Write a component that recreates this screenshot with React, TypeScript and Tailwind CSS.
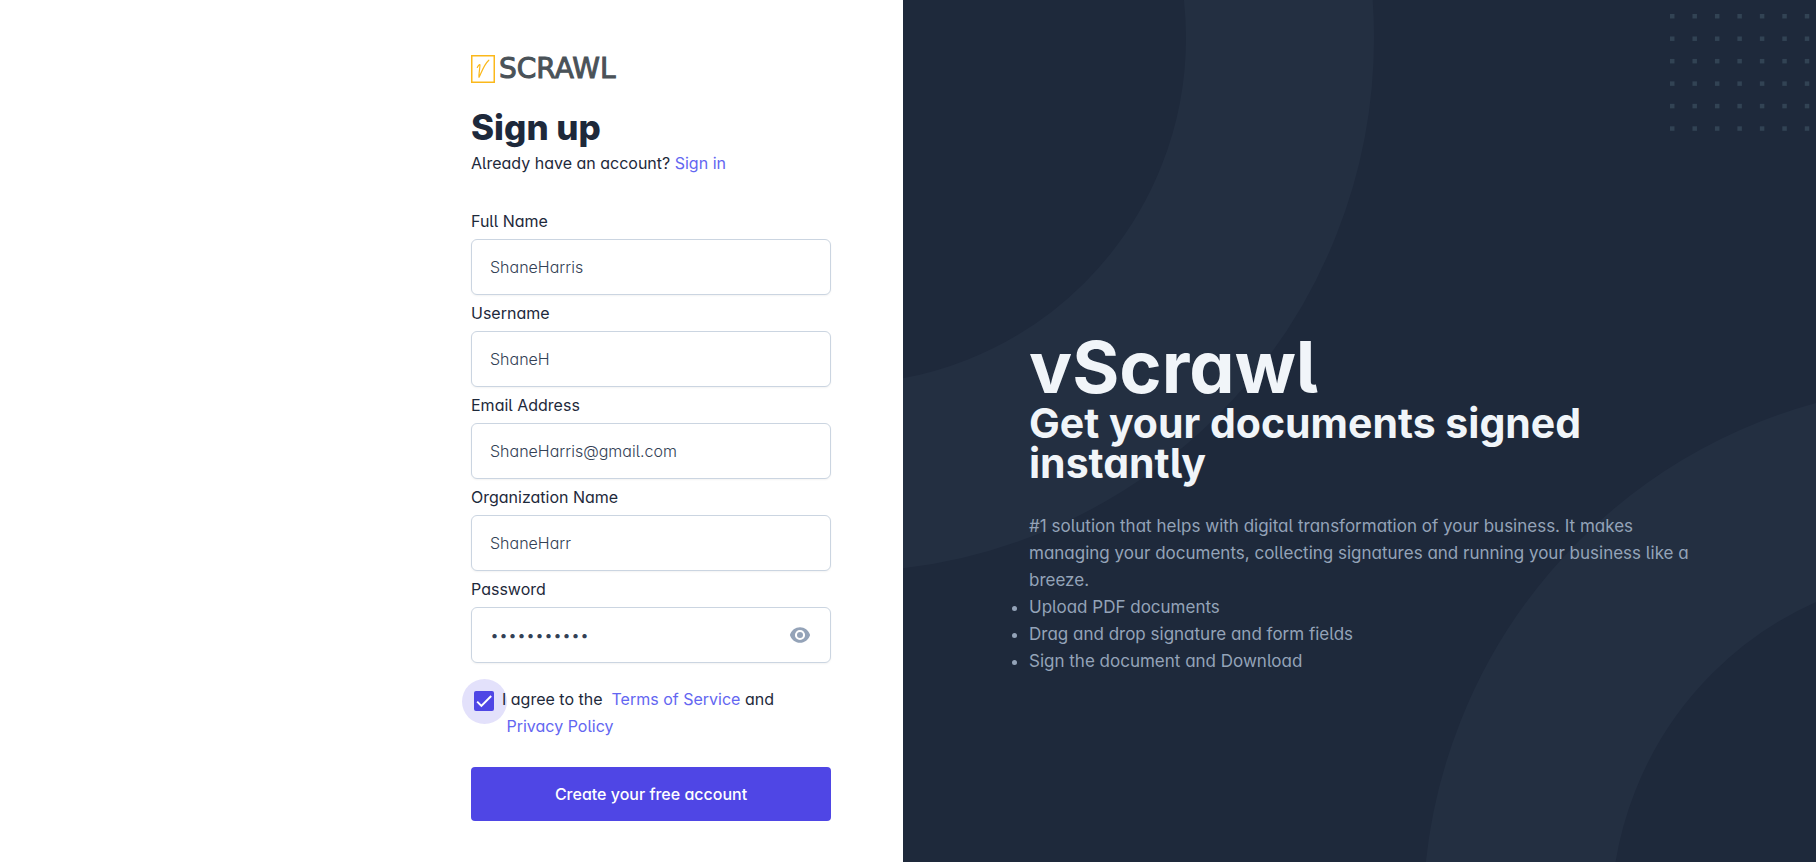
import React from "react";

const fields = [
  { id: "fullName", label: "Full Name", type: "text", value: "ShaneHarris" },
  { id: "username", label: "Username", type: "text", value: "ShaneH" },
  { id: "email", label: "Email Address", type: "email", value: "ShaneHarris@gmail.com" },
  { id: "organization", label: "Organization Name", type: "text", value: "ShaneHarr" },
  { id: "password", label: "Password", type: "password", value: "Shane123456" },
];

const perks = ["Upload PDF documents", "Drag and drop signature and form fields", "Sign the document and Download"];

const dots = Array.from({ length: 42 }, (_, i) => ({ x: (i % 7) * 20, y: Math.floor(i / 7) * 20 }));

function Logo() {
  return (
    <div className="flex h-7 items-center gap-1 text-[#4a5258]">
      <svg className="h-7 w-6" viewBox="0 0 24 28" fill="none" aria-hidden="true">
        <rect x="0.75" y="0.75" width="22.5" height="26.5" stroke="#fbb81b" strokeWidth="1.5" />
        <path d="M6.300 12.500C7 10.800 8.300 9.300 8.900 9.800C9.300 11 7.600 19 8 22.300C9.800 19.500 12.500 10 17.800 5.200" stroke="#fbb81b" strokeWidth="1.2" strokeLinecap="round" strokeLinejoin="round" />
      </svg>
      <span className="font-['DejaVu_Sans',sans-serif] text-[28px] leading-7 [-webkit-text-stroke:1px]">SCRAWL</span>
    </div>
  );
}

function EyeIcon() {
  return (
    <svg className="size-6" viewBox="0 0 24 24" fill="currentColor" aria-hidden="true">
      <path fillRule="evenodd" d="M12 4.200C16.600 4.200 20.600 7.200 22.100 12C20.600 16.800 16.600 19.800 12 19.800S3.400 16.800 1.900 12C3.400 7.200 7.400 4.200 12 4.200zM12 6.900a5.100 5.100 0 1 0 0 10.200 5.100 5.100 0 0 0 0-10.200z" />
      <circle cx="12" cy="12" r="3" />
    </svg>
  );
}

export default function App() {
  return (
    <div className="grid min-h-screen grid-cols-[903fr_913fr] bg-white font-['Inter',sans-serif] text-base text-[#1e293b] [font-feature-settings:'cv11','cv05']">
      <main className="flex justify-end px-18 pt-[55px] pb-10">
        <div className="w-full max-w-90">
          <Logo />
          <h1 className="mt-5 text-[35px] leading-[48px] font-extrabold">Sign up</h1>
          <p className="leading-6">
            Already have an account?{" "}
            <a href="#signin" className="text-[#6366f1]">Sign in</a>
          </p>
          <form className="mt-7" onSubmit={(e) => e.preventDefault()}>
            {fields.map((f) => (
              <div key={f.id} className="flex flex-col">
                <label htmlFor={f.id} className="pt-1.5 pb-1.5 leading-6">{f.label}</label>
                <div className="flex h-14 items-center rounded-md border border-[#cbd5e1] bg-white px-[18px] shadow-xs">
                  <input id={f.id} type={f.type} defaultValue={f.value} className="min-w-0 flex-1 font-light text-[#334155] outline-none" />
                  {f.type === "password" && (
                    <button type="button" aria-label="Show password" className="text-[#94a3b8]">
                      <EyeIcon />
                    </button>
                  )}
                </div>
              </div>
            ))}
            <div className="mt-[23px] flex items-start">
              <span className="relative mt-[3px] grid h-6 w-[26px] place-items-center">
                <span className="absolute size-[45px] rounded-full bg-[#4f46e5]/16" />
                <input id="agree" type="checkbox" defaultChecked className="relative size-5 appearance-none rounded-xs bg-[#4f46e5]" />
                <svg className="pointer-events-none absolute size-4" viewBox="0 0 24 24" fill="none" stroke="#fff" strokeWidth="3" aria-hidden="true">
                  <path d="M1.730 12.910 8.100 19.280 22.790 4.590" />
                </svg>
              </span>
              <label htmlFor="agree" className="relative flex-1 pl-[5px] leading-[27px]">
                I agree to the &nbsp;<a href="#terms" className="text-[#6366f1]">Terms of Service</a> and
                <br />
                &nbsp;<a href="#privacy" className="text-[#6366f1]">Privacy Policy</a>
              </label>
            </div>
            <button type="submit" className="mt-[27px] h-[54px] w-full rounded-sm bg-[#4f46e5] font-medium text-white">
              Create your free account
            </button>
          </form>
        </div>
      </main>
      <aside className="relative flex items-center overflow-hidden bg-[#1e293b] pt-[144px] pr-16 pl-[126px] text-[#f1f5f9]">
        <svg className="pointer-events-none absolute inset-0 size-full text-[#334155] opacity-25" viewBox="0 0 913 862" preserveAspectRatio="xMidYMax slice" fill="none" stroke="currentColor" strokeWidth="188" aria-hidden="true">
          <circle cx="-63" cy="38" r="440" />
          <circle cx="1054" cy="918" r="440" />
        </svg>
        <svg className="pointer-events-none absolute top-3.5 right-0 h-[117px] w-[146px]" viewBox="0 0 130 104" preserveAspectRatio="xMinYMin" fill="#324354" aria-hidden="true">
          {dots.map((d) => (
            <rect key={`${d.x}-${d.y}`} x={d.x} y={d.y} width="4" height="4" />
          ))}
        </svg>
        <section className="relative w-full max-w-2xl">
          <h2 className="text-7xl leading-none font-bold">vScrawl</h2>
          <p className="text-[41px] leading-10 font-bold">Get your documents signed instantly</p>
          <p className="mt-7.5 text-[17px] leading-[27px] text-[#94a3b8]">
            #1 solution that helps with digital transformation of your business. It makes managing your documents, collecting signatures and running your business like a breeze.
          </p>
          <ul className="list-disc text-[17px] leading-[27px] text-[#94a3b8]">
            {perks.map((p) => (
              <li key={p}>{p}</li>
            ))}
          </ul>
        </section>
      </aside>
    </div>
  );
}
